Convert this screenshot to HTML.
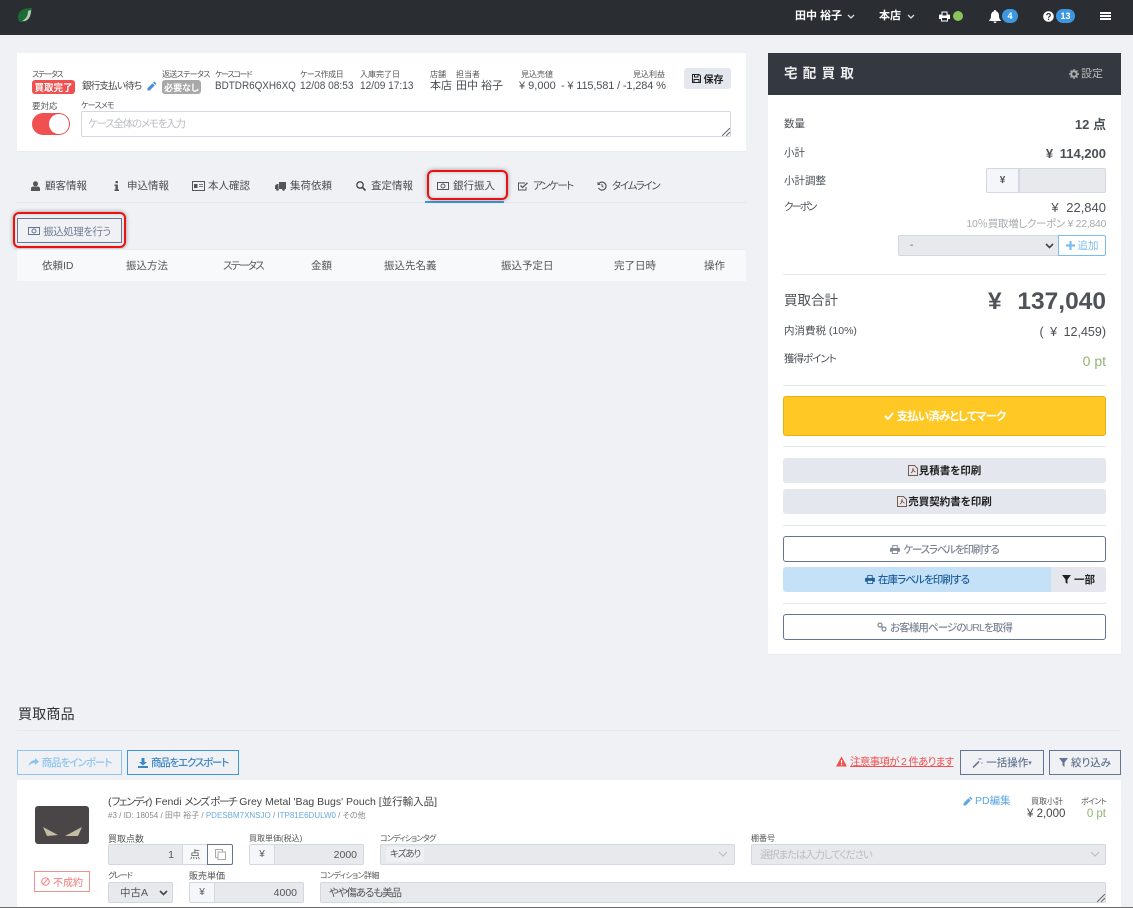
<!DOCTYPE html>
<html lang="ja"><head><meta charset="utf-8"><title>宅配買取</title>
<style>
html,body{margin:0;padding:0}
body{position:relative;width:1133px;height:908px;overflow:hidden;background:#eff1f5;font-family:"Liberation Sans","Noto Sans CJK JP",sans-serif;color:#4a4f55;font-size:11px;font-feature-settings:"palt" 1}
.a,.t,.r{position:absolute;box-sizing:border-box}
.t,.r{white-space:nowrap;line-height:14px}
.r{text-align:right}
.l{font-size:8px;color:#555}
.b{position:absolute;box-sizing:border-box;display:flex;align-items:center;justify-content:center;gap:3px;white-space:nowrap;border-radius:2px}
.in{position:absolute;box-sizing:border-box;background:#e7e9ed;border:1px solid #d3d7e3;border-radius:2px;display:flex;align-items:center;white-space:nowrap;color:#555}
.ad{position:absolute;box-sizing:border-box;background:#f5f6f9;border:1px solid #d3d7e3;display:flex;align-items:center;justify-content:center;color:#555}
.hr{position:absolute;height:1px;background:#e4e7ee}
svg{display:block;flex:none}
.th{position:absolute;top:259px;line-height:14px;font-size:10.500px;color:#555;white-space:nowrap}
.tab{position:absolute;top:179px;line-height:14px;font-size:10.500px;color:#4a4f55;white-space:nowrap;display:flex;align-items:center}
.n{transform-origin:left center}
.k{letter-spacing:-1.300px}
</style></head><body>

<!-- top bar -->
<div class="a" style="left:0;top:0;width:1133px;height:35px;background:#2a2e33"></div>
<svg class="a" style="left:17px;top:7px" width="16" height="16" viewBox="0 0 16 16"><path d="M15 1C7 1 2 3 1 9c-.4 3 1 6 3 6 7 0 10-5 11-14z" fill="#1c6b35"/><path d="M11 4c0 5-2 8-6 10 5 1 9-3 9-11z" fill="#b9c9bd"/></svg>
<div class="t" style="left:795px;top:9px;color:#fff;font-weight:bold;font-size:11px">田中 裕子</div>
<svg class="a" style="left:847px;top:14px" width="8" height="6" viewBox="0 0 8 6"><path d="M1 1l3 3 3-3" fill="none" stroke="#ddd" stroke-width="1.300"/></svg>
<div class="t" style="left:879px;top:9px;color:#fff;font-weight:bold;font-size:11px">本店</div>
<svg class="a" style="left:907px;top:14px" width="8" height="6" viewBox="0 0 8 6"><path d="M1 1l3 3 3-3" fill="none" stroke="#ddd" stroke-width="1.300"/></svg>
<svg class="a" style="left:939px;top:11px" width="11" height="11" viewBox="0 0 11 11"><path d="M2.500 .5h6v3h1.500a1 1 0 0 1 1 1v3.500H9v2.500H2V8H0V4.500a1 1 0 0 1 1-1h1.500zM3.500 1.500v3h4v-3zM3 7v2.500h5V7z" fill="#fff" fill-rule="evenodd"/></svg>
<div class="a" style="left:953px;top:11px;width:10px;height:10px;border-radius:50%;background:#8cc45c"></div>
<svg class="a" style="left:989px;top:10px" width="12" height="13" viewBox="0 0 12 13"><path d="M6 0a1 1 0 0 1 1 1.200C9 1.700 10 3.500 10 5.500c0 3 .8 3.800 1.800 4.800v.7H.2v-.7C1.200 9.300 2 8.500 2 5.500c0-2 1-3.800 3-4.300A1 1 0 0 1 6 0zM4.500 11.500h3a1.500 1.500 0 0 1-3 0z" fill="#fff"/></svg>
<div class="a" style="left:1002px;top:9px;width:16px;height:14px;border-radius:7px;background:#3d97e0;color:#fff;font-size:9px;font-weight:bold;text-align:center;line-height:14px">4</div>
<svg class="a" style="left:1043px;top:11px" width="11" height="11" viewBox="0 0 11 11"><circle cx="5.500" cy="5.500" r="5.300" fill="#fff"/><path d="M3.800 4.200c0-2.200 3.500-2.200 3.500 0 0 1.400-1.700 1.300-1.700 2.500" fill="none" stroke="#2a2e33" stroke-width="1.200"/><rect x="4.900" y="7.600" width="1.300" height="1.300" fill="#2a2e33"/></svg>
<div class="a" style="left:1056px;top:9px;width:19px;height:14px;border-radius:7px;background:#3d97e0;color:#fff;font-size:9px;font-weight:bold;text-align:center;line-height:14px">13</div>
<div class="a" style="left:1100px;top:12px;width:11px;height:2px;background:#fff"></div>
<div class="a" style="left:1100px;top:15px;width:11px;height:2px;background:#fff"></div>
<div class="a" style="left:1100px;top:18px;width:11px;height:2px;background:#fff"></div>

<!-- case card -->
<div class="a" style="left:17px;top:53px;width:729px;height:99px;background:#fff;border-bottom:1px solid #e9ebf0"></div>
<div class="t l" style="left:32px;top:68px;letter-spacing:-1.200px">ステータス</div>
<div class="b" style="left:32px;top:80px;width:43px;height:14px;background:#f05050;color:#fff;font-weight:bold;font-size:9.500px;border-radius:3px">買取完了</div>
<div class="t" style="left:82px;top:80px;font-size:9.500px;color:#444;letter-spacing:-.8px">銀行支払い待ち</div>
<svg class="a" style="left:147px;top:81px" width="10" height="10" viewBox="0 0 10 10"><path d="M7.300.5l2.200 2.200-1.200 1.200L6.100 1.700zM5.500 2.300l2.200 2.200L2.700 9.500H.5V7.300z" fill="#4a90d9"/></svg>
<div class="t l" style="left:162px;top:68px;letter-spacing:-.7px">返送ステータス</div>
<div class="b" style="left:162px;top:80px;width:39px;height:14px;background:#a8a8a8;color:#fff;font-weight:bold;font-size:9px;border-radius:3px">必要なし</div>
<div class="t l" style="left:215px;top:68px;letter-spacing:-1.300px">ケースコード</div>
<div class="t n" style="left:215px;top:79px;font-size:11px;transform:scaleX(.9)">BDTDR6QXH6XQ</div>
<div class="t l" style="left:300px;top:68px;letter-spacing:-.5px">ケース作成日</div>
<div class="t n" style="left:300px;top:79px;font-size:11px;transform:scaleX(.92)">12/08 08:53</div>
<div class="t l" style="left:360px;top:68px">入庫完了日</div>
<div class="t n" style="left:360px;top:79px;font-size:11px;transform:scaleX(.92)">12/09 17:13</div>
<div class="t l" style="left:430px;top:68px">店舗</div>
<div class="t" style="left:430px;top:79px;font-size:11px">本店</div>
<div class="t l" style="left:456px;top:68px">担当者</div>
<div class="t" style="left:456px;top:79px;font-size:11px">田中 裕子</div>
<div class="t l" style="left:521px;top:68px">見込売値</div>
<div class="t" style="left:519px;top:79px;font-size:11px">¥ 9,000</div>
<div class="t" style="left:561px;top:79px;font-size:11px;letter-spacing:-.15px">- ¥ 115,581 / -1,284 %</div>
<div class="t l" style="left:633px;top:68px">見込利益</div>
<div class="b" style="left:684px;top:68px;width:47px;height:21px;background:#e4e7ee;color:#222;font-weight:bold;font-size:10px;border-radius:3px"><svg width="9" height="9" viewBox="0 0 9 9"><path d="M.5.500h6.500l1.500 1.500v6.500H.5zM2.500 1v2h3.500V1M2 8.500V5.500h5v3" fill="none" stroke="#222"/></svg>保存</div>
<div class="t l" style="left:32px;top:99px;font-size:8.500px">要対応</div>
<div class="a" style="left:32px;top:113px;width:38px;height:22px;border-radius:11px;background:#f05050"></div>
<div class="a" style="left:49px;top:114px;width:20px;height:20px;border-radius:50%;background:#fff"></div>
<div class="t l" style="left:81px;top:99px;letter-spacing:-.8px">ケースメモ</div>
<div class="a" style="left:81px;top:111px;width:650px;height:26px;background:#fff;border:1px solid #d3d7e3;border-radius:2px"></div>
<div class="t" style="left:88px;top:117px;font-size:10.500px;color:#b9bcc2;letter-spacing:-1.200px">ケース全体のメモを入力</div>
<svg class="a" style="left:722px;top:128px" width="8" height="8" viewBox="0 0 8 8"><path d="M0 8l8-8M4 8l4-4" stroke="#666" stroke-width="1"/></svg>

<!-- tabs -->
<div class="tab" style="left:31px;gap:5px"><svg width="9" height="10" viewBox="0 0 9 10"><circle cx="4.500" cy="2.800" r="2.500" fill="#555"/><path d="M0 10V7.500C0 6 1.500 5.500 2.500 5.500h4C7.500 5.500 9 6 9 7.500V10z" fill="#555"/></svg>顧客情報</div>
<div class="tab" style="left:114px;gap:8px"><svg width="5" height="10" viewBox="0 0 5 10"><rect x="1.500" width="2.400" height="2.200" fill="#555"/><path d="M.5 3.500h3.400v5H5V10H.5V8.500h1v-3.500h-1z" fill="#555"/></svg>申込情報</div>
<div class="tab" style="left:192px;gap:3px"><svg width="13" height="10" viewBox="0 0 13 10"><rect x=".5" y=".5" width="12" height="9" fill="none" stroke="#555"/><rect x="2" y="3" width="3.500" height="4" fill="#555"/><path d="M7 3.500h4M7 5.500h4" stroke="#777"/></svg>本人確認</div>
<div class="tab" style="left:275px;gap:4px"><svg width="11" height="9" viewBox="0 0 11 9"><path d="M4 0h7v7H4zM0 3.500L2 2h1.500v5H0z" fill="#555"/><circle cx="2.500" cy="7.500" r="1.300" fill="#555"/><circle cx="8.500" cy="7.500" r="1.300" fill="#555"/></svg>集荷依頼</div>
<div class="tab" style="left:356px;gap:5px"><svg width="10" height="10" viewBox="0 0 10 10"><circle cx="4" cy="4" r="3.200" fill="none" stroke="#444" stroke-width="1.300"/><path d="M6.500 6.500L9.500 9.500" stroke="#444" stroke-width="1.600"/></svg>査定情報</div>
<div class="tab" style="left:437px;gap:4px"><svg width="12" height="8" viewBox="0 0 12 8"><rect x=".5" y=".5" width="11" height="7" fill="none" stroke="#555"/><circle cx="6" cy="4" r="2" fill="none" stroke="#555"/></svg>銀行振入</div>
<div class="tab" style="left:518px;gap:5px;letter-spacing:-1.400px"><svg width="10" height="9" viewBox="0 0 10 9"><path d="M8 5v3H.5V1H7" fill="none" stroke="#555"/><path d="M2.500 3.500l2 2L9.500.8" fill="none" stroke="#555" stroke-width="1.300"/></svg>アンケート</div>
<div class="tab" style="left:597px;gap:5px;letter-spacing:-1.300px"><svg width="10" height="10" viewBox="0 0 10 10"><path d="M2 2.500a4 4 0 1 1-.5 4.500" fill="none" stroke="#555" stroke-width="1.200"/><path d="M.5 .8v3.200h3.200z" fill="#555"/><path d="M5 3v2.200l1.500 1" fill="none" stroke="#555"/></svg>タイムライン</div>
<div class="hr" style="left:17px;top:202px;width:729px"></div>
<div class="a" style="left:425px;top:201px;width:79px;height:2px;background:#3d97e0"></div>
<div class="a" style="left:427px;top:170px;width:81px;height:30px;border:2px solid #ee0f0f;border-radius:6px;box-shadow:0 0 4px rgba(0,0,0,.4),inset 0 0 3px rgba(0,0,0,.2)"></div>

<!-- transfer button -->
<div class="a" style="left:13px;top:212px;width:113px;height:36px;border:2px solid #ee0f0f;border-radius:6px;box-shadow:0 0 4px rgba(0,0,0,.4),inset 0 0 3px rgba(0,0,0,.15)"></div>
<div class="b" style="left:17px;top:218px;width:105px;height:25px;padding-top:1px;border:1px solid #66758f;border-radius:0;color:#717d92;font-size:10.500px;letter-spacing:-.5px"><svg width="12" height="8" viewBox="0 0 12 8"><rect x=".5" y=".5" width="11" height="7" fill="none" stroke="#66758f"/><circle cx="6" cy="4" r="2" fill="none" stroke="#66758f"/></svg>振込処理を行う</div>

<!-- table -->
<div class="a" style="left:17px;top:249px;width:729px;height:32px;background:#f8f9fb;border-top:1px solid #e9ebf0"></div>
<div class="th" style="left:42px">依頼ID</div>
<div class="th" style="left:126px">振込方法</div>
<div class="th" style="left:223px;letter-spacing:-1.600px">ステータス</div>
<div class="th" style="left:311px">金額</div>
<div class="th" style="left:384px">振込先名義</div>
<div class="th" style="left:501px">振込予定日</div>
<div class="th" style="left:614px">完了日時</div>
<div class="th" style="left:704px">操作</div>

<!-- right panel -->
<div class="a" style="left:768px;top:53px;width:353px;height:42px;background:#343840"></div>
<div class="a" style="left:768px;top:95px;width:353px;height:560px;background:#fff;border-bottom:1px solid #e9ebf0"></div>
<div class="t" style="left:784px;top:67px;color:#eee;font-weight:bold;font-size:13.500px;letter-spacing:5.300px">宅配買取</div>
<svg class="a" style="left:1069px;top:69px" width="10" height="10" viewBox="0 0 10 10"><circle cx="5" cy="5" r="2.800" fill="none" stroke="#aaa" stroke-width="2"/><path d="M5 0v2M5 8v2M0 5h2M8 5h2M1.500 1.500l1.400 1.400M7.100 7.100l1.400 1.400M8.500 1.500L7.100 2.900M2.900 7.100L1.500 8.500" stroke="#aaa" stroke-width="1.500"/></svg>
<div class="t" style="left:1081px;top:67px;color:#bbb;font-size:11px">設定</div>

<div class="t" style="left:784px;top:117px;font-size:10.500px">数量</div>
<div class="r" style="right:27px;top:118px;font-size:13px;font-weight:bold">12 点</div>
<div class="t" style="left:784px;top:146px;font-size:10.500px">小計</div>
<div class="r" style="right:27px;top:147px;font-size:13px;font-weight:bold;word-spacing:3px">¥ 114,200</div>
<div class="t" style="left:784px;top:174px;font-size:10.500px">小計調整</div>
<div class="ad" style="left:986px;top:168px;width:33px;height:25px;border-radius:2px 0 0 2px;font-size:10px;font-weight:bold">¥</div>
<div class="in" style="left:1019px;top:168px;width:87px;height:25px;border-radius:0 2px 2px 0"></div>
<div class="t" style="left:784px;top:200px;font-size:10.500px;letter-spacing:-2px">クーポン</div>
<div class="r" style="right:27px;top:201px;font-size:13px;word-spacing:4px">¥ 22,840</div>
<div class="r" style="right:27px;top:217px;font-size:10.500px;color:#a6a9ae;letter-spacing:-.3px">10％買取増しクーポン ¥ 22,840</div>
<div class="in" style="left:898px;top:235px;width:161px;height:21px;padding-left:11px;font-size:10px;border-radius:2px 0 0 2px">-</div>
<svg class="a" style="left:1045px;top:243px" width="9" height="6" viewBox="0 0 9 6"><path d="M1 1l3.500 3.500L8 1" fill="none" stroke="#444" stroke-width="1.600"/></svg>
<div class="b" style="left:1058px;top:235px;width:48px;height:21px;border:1px solid #7dbcef;background:#fff;color:#7dbcef;font-size:10.500px;border-radius:0 2px 2px 0"><svg width="9" height="9" viewBox="0 0 9 9"><path d="M4.500 0v9M0 4.500h9" stroke="#7dbcef" stroke-width="2.200"/></svg>追加</div>
<div class="hr" style="left:783px;top:274px;width:323px"></div>
<div class="t" style="left:784px;top:294px;font-size:13.500px">買取合計</div>
<div class="r" style="right:27px;top:292px;font-size:24.500px;font-weight:bold;line-height:20px;word-spacing:9px;color:#4f5358">¥ 137,040</div>
<div class="t" style="left:784px;top:324px;font-size:10.500px">内消費税 (10%)</div>
<div class="r" style="right:27px;top:325px;font-size:12.500px;word-spacing:3px">( ¥ 12,459)</div>
<div class="t" style="left:784px;top:352px;font-size:10.500px;letter-spacing:-1px">獲得ポイント</div>
<div class="r" style="right:27px;top:354px;font-size:14px;color:#8cb573">0 pt</div>
<div class="hr" style="left:783px;top:385px;width:323px"></div>
<div class="b" style="left:783px;top:396px;width:323px;height:40px;background:#ffc824;border:1px solid #e8b10c;color:#fff;font-weight:bold;font-size:11.500px;border-radius:3px;letter-spacing:-.9px"><svg width="10" height="8" viewBox="0 0 10 8"><path d="M1 4l3 3 5-6" fill="none" stroke="#fff" stroke-width="2"/></svg>支払い済みとしてマーク</div>
<div class="hr" style="left:783px;top:446px;width:323px"></div>
<div class="b" style="left:783px;top:458px;width:323px;height:25px;background:#e4e7ee;color:#222;font-size:10.500px;font-weight:bold;border-radius:3px;gap:1px"><svg width="10" height="11" viewBox="0 0 10 11"><path d="M.5.500h6l3 3v7h-9z" fill="none" stroke="#7a5a48"/><path d="M3 8c1.500-1 2-3 2-5 0 2 1 3.500 2.500 4" fill="none" stroke="#7a4a38" stroke-width=".8"/></svg>見積書を印刷</div>
<div class="b" style="left:783px;top:489px;width:323px;height:25px;background:#e4e7ee;color:#222;font-size:10.500px;font-weight:bold;border-radius:3px;gap:1px"><svg width="10" height="11" viewBox="0 0 10 11"><path d="M.5.500h6l3 3v7h-9z" fill="none" stroke="#7a5a48"/><path d="M3 8c1.500-1 2-3 2-5 0 2 1 3.500 2.500 4" fill="none" stroke="#7a4a38" stroke-width=".8"/></svg>売買契約書を印刷</div>
<div class="hr" style="left:783px;top:525px;width:323px"></div>
<div class="b" style="left:783px;top:536px;width:323px;height:26px;border:1px solid #66758f;background:#fff;color:#7d8694;font-size:10.500px;font-weight:500;border-radius:3px;letter-spacing:-1.200px"><svg width="10" height="9" viewBox="0 0 11 10"><path d="M2.500 0h6v3h1.500a1 1 0 0 1 1 1v3.500H9V10H2V7.500H0V4a1 1 0 0 1 1-1h1.500zM3.500 1v2.500h4V1zM3 6.500V9h5V6.500z" fill="#7d8694" fill-rule="evenodd"/></svg>ケースラベルを印刷する</div>
<div class="b" style="left:783px;top:567px;width:268px;height:25px;background:#c5e1f7;color:#1f5f9c;font-size:10.500px;font-weight:500;border-radius:3px 0 0 3px;letter-spacing:-.9px"><svg width="10" height="9" viewBox="0 0 11 10"><path d="M2.500 0h6v3h1.500a1 1 0 0 1 1 1v3.500H9V10H2V7.500H0V4a1 1 0 0 1 1-1h1.500zM3.500 1v2.500h4V1zM3 6.500V9h5V6.500z" fill="#1f5f9c" fill-rule="evenodd"/></svg>在庫ラベルを印刷する</div>
<div class="b" style="left:1051px;top:567px;width:55px;height:25px;background:#e4e7ee;color:#222;font-size:10.500px;font-weight:bold;border-radius:0 3px 3px 0"><svg width="9" height="9" viewBox="0 0 9 9"><path d="M0 0h9L5.500 4.500V9l-2-1.500v-3z" fill="#222"/></svg>一部</div>
<div class="hr" style="left:783px;top:603px;width:323px"></div>
<div class="b" style="left:783px;top:614px;width:323px;height:26px;border:1px solid #66758f;background:#fff;color:#7d8694;font-size:10.500px;font-weight:500;border-radius:3px;letter-spacing:-.9px"><svg width="10" height="10" viewBox="0 0 10 10"><circle cx="3" cy="3" r="2" fill="none" stroke="#7d8694" stroke-width="1.200"/><circle cx="7" cy="7" r="2" fill="none" stroke="#7d8694" stroke-width="1.200"/><path d="M4 4l2 2" stroke="#7d8694" stroke-width="1.200"/></svg>お客様用ページのURLを取得</div>

<!-- items -->
<div class="t" style="left:18px;top:707px;font-size:14px;color:#333;letter-spacing:.2px">買取商品</div>
<div class="hr" style="left:17px;top:730px;width:1104px"></div>
<div class="b" style="left:17px;top:750px;width:105px;height:25px;border:1px solid #8fc4ef;color:#8fc4ef;font-size:10.500px;font-weight:500;border-radius:0;letter-spacing:-1px"><svg width="11" height="9" viewBox="0 0 11 9"><path d="M7 0l4 3.500L7 7V5C4 5 2 6 .5 8.500 1 5 3 2.500 7 2z" fill="#8fc4ef"/></svg>商品をインポート</div>
<div class="b" style="left:127px;top:750px;width:112px;height:25px;border:1px solid #3d97e0;color:#3d86c6;font-size:10.500px;font-weight:500;border-radius:0;letter-spacing:-1.200px"><svg width="10" height="10" viewBox="0 0 10 10"><path d="M3.500 0h3v4h2.500L5 7.500 1 4h2.500zM0 8h10v2H0z" fill="#3d86c6"/></svg>商品をエクスポート</div>
<svg class="a" style="left:836px;top:756px" width="11" height="11" viewBox="0 0 11 11"><path d="M5.500.5L11 10.500H0z" fill="#f05050"/><rect x="5" y="4" width="1.100" height="3.500" fill="#fff"/><rect x="5" y="8.200" width="1.100" height="1.100" fill="#fff"/></svg>
<div class="t" style="left:850px;top:755px;font-size:10.500px;color:#f05050;text-decoration:underline;letter-spacing:-.7px">注意事項が 2 件あります</div>
<div class="b" style="left:960px;top:750px;width:84px;height:25px;border:1px solid #66758f;color:#66758f;font-size:10.500px;font-weight:500;border-radius:0"><svg width="11" height="10" viewBox="0 0 11 10"><path d="M1 9.500L7 3.500" stroke="#66758f" stroke-width="1.600"/><path d="M8 0v2M10 1H6M10 4v2" stroke="#8a95a8" stroke-width=".8"/></svg>一括操作 <span style="font-size:7px;margin-left:-3px">▾</span></div>
<div class="b" style="left:1049px;top:750px;width:72px;height:25px;border:1px solid #66758f;color:#66758f;font-size:10.500px;font-weight:500;border-radius:0"><svg width="9" height="9" viewBox="0 0 9 9"><path d="M0 0h9L5.500 4.500V9l-2-1.500v-3z" fill="#66758f"/></svg>絞り込み</div>

<div class="a" style="left:17px;top:780px;width:1104px;height:128px;background:#fff"></div>
<!-- bag -->
<div class="a" style="left:35px;top:806px;width:54px;height:38px;background:#4a4648;border-radius:3px"></div>
<svg class="a" style="left:35px;top:806px" width="54" height="38" viewBox="0 0 54 38"><path d="M8 21l15 8-11 1z" fill="#c4bda4"/><path d="M47 21L30 30l13 0z" fill="#c4bda4"/></svg>
<div class="b" style="left:34px;top:871px;width:56px;height:21px;border:1px solid #f28f8f;color:#f28f8f;font-size:10px;font-weight:500;border-radius:0"><svg width="9" height="9" viewBox="0 0 9 9"><circle cx="4.500" cy="4.500" r="3.700" fill="none" stroke="#f28f8f" stroke-width="1.200"/><path d="M2 7l5-5" stroke="#f28f8f" stroke-width="1.200"/></svg>不成約</div>

<div class="t" style="left:108px;top:795px;font-size:10.500px;color:#444">(<span class="k">フェンディ</span>) Fendi <span class="k">メンズ ポーチ</span> Grey Metal 'Bag Bugs' Pouch [並行輸入品]</div>
<div class="t" style="left:108px;top:809px;font-size:8px;color:#888">#3 / ID: 18054 / 田中 裕子 / <span style="color:#6aa9e0">PDESBM7XNSJO</span> / <span style="color:#6aa9e0">ITP81E6DULW0</span> / その他</div>

<div class="t l" style="left:108px;top:832px;font-size:9px">買取点数</div>
<div class="in" style="left:108px;top:844px;width:75px;height:21px;justify-content:flex-end;padding-right:8px;font-size:10.500px;border-radius:2px 0 0 2px">1</div>
<div class="ad" style="left:182px;top:844px;width:26px;height:21px;font-size:10.500px;background:#f8f9fb">点</div>
<div class="b" style="left:207px;top:844px;width:26px;height:21px;border:1px solid #66758f;background:#fff;border-radius:0 2px 2px 0"><svg width="11" height="11" viewBox="0 0 11 11"><path d="M2.500 8.500H.5V.5h7v2" fill="none" stroke="#aaa"/><rect x="3" y="3" width="7.500" height="7.500" fill="none" stroke="#aaa"/></svg></div>
<div class="t l" style="left:249px;top:832px">買取単価(税込)</div>
<div class="ad" style="left:249px;top:844px;width:26px;height:21px;border-radius:2px 0 0 2px;font-size:10px">¥</div>
<div class="in" style="left:274px;top:844px;width:90px;height:21px;justify-content:flex-end;padding-right:6px;font-size:10.500px;border-radius:0 2px 2px 0">2000</div>
<div class="t l" style="left:380px;top:832px;letter-spacing:-.8px">コンディションタグ</div>
<div class="in" style="left:380px;top:844px;width:355px;height:21px;font-size:9.500px;padding-left:5px"><span style="background:#eef0f3;padding:1px 4px;border-radius:2px;line-height:13px;letter-spacing:-1.200px">キズあり</span></div>
<svg class="a" style="left:718px;top:851px" width="10" height="7" viewBox="0 0 10 7"><path d="M1 1l4 4 4-4" fill="none" stroke="#bbb"/></svg>
<div class="t l" style="left:751px;top:832px">棚番号</div>
<div class="in" style="left:751px;top:844px;width:355px;height:21px;font-size:10.500px;padding-left:8px;color:#b9bcc2;letter-spacing:-1.200px">選択または入力してください</div>
<svg class="a" style="left:1090px;top:851px" width="10" height="7" viewBox="0 0 10 7"><path d="M1 1l4 4 4-4" fill="none" stroke="#bbb"/></svg>

<div class="t l" style="left:108px;top:869px;letter-spacing:-1.200px">グレード</div>
<div class="in" style="left:108px;top:882px;width:65px;height:21px;font-size:10.500px;padding-left:11px">中古A</div>
<svg class="a" style="left:159px;top:890px" width="9" height="6" viewBox="0 0 9 6"><path d="M1 1l3.500 3.500L8 1" fill="none" stroke="#444" stroke-width="1.600"/></svg>
<div class="t l" style="left:189px;top:869px;font-size:9px">販売単価</div>
<div class="ad" style="left:189px;top:882px;width:26px;height:21px;border-radius:2px 0 0 2px;font-size:10px">¥</div>
<div class="in" style="left:214px;top:882px;width:90px;height:21px;justify-content:flex-end;padding-right:6px;font-size:10.500px;border-radius:0 2px 2px 0">4000</div>
<div class="t l" style="left:320px;top:869px;letter-spacing:-.6px">コンディション詳細</div>
<div class="in" style="left:320px;top:882px;width:786px;height:21px;font-size:10.500px;padding-left:8px;letter-spacing:-1.100px">やや傷あるも美品</div>
<svg class="a" style="left:1097px;top:894px" width="8" height="8" viewBox="0 0 8 8"><path d="M0 8l8-8M4 8l4-4" stroke="#666" stroke-width="1"/></svg>

<svg class="a" style="left:963px;top:796px" width="10" height="10" viewBox="0 0 10 10"><path d="M7.300.5l2.200 2.200-1.200 1.200L6.100 1.700zM5.500 2.300l2.200 2.200L2.700 9.500H.5V7.300z" fill="#5ba6e6"/></svg>
<div class="t" style="left:975px;top:794px;font-size:10.500px;color:#5ba6e6">PD編集</div>
<div class="t l" style="left:1031px;top:795px">買取小計</div>
<div class="t" style="left:1027px;top:807px;font-size:11.500px;color:#444">¥ 2,000</div>
<div class="t l" style="left:1081px;top:795px;letter-spacing:-.7px">ポイント</div>
<div class="r" style="right:27px;top:807px;font-size:11.500px;color:#8cb573">0 pt</div>

<div class="a" style="left:0;top:907px;width:1133px;height:1px;background:#6b6b6b"></div>
</body></html>
